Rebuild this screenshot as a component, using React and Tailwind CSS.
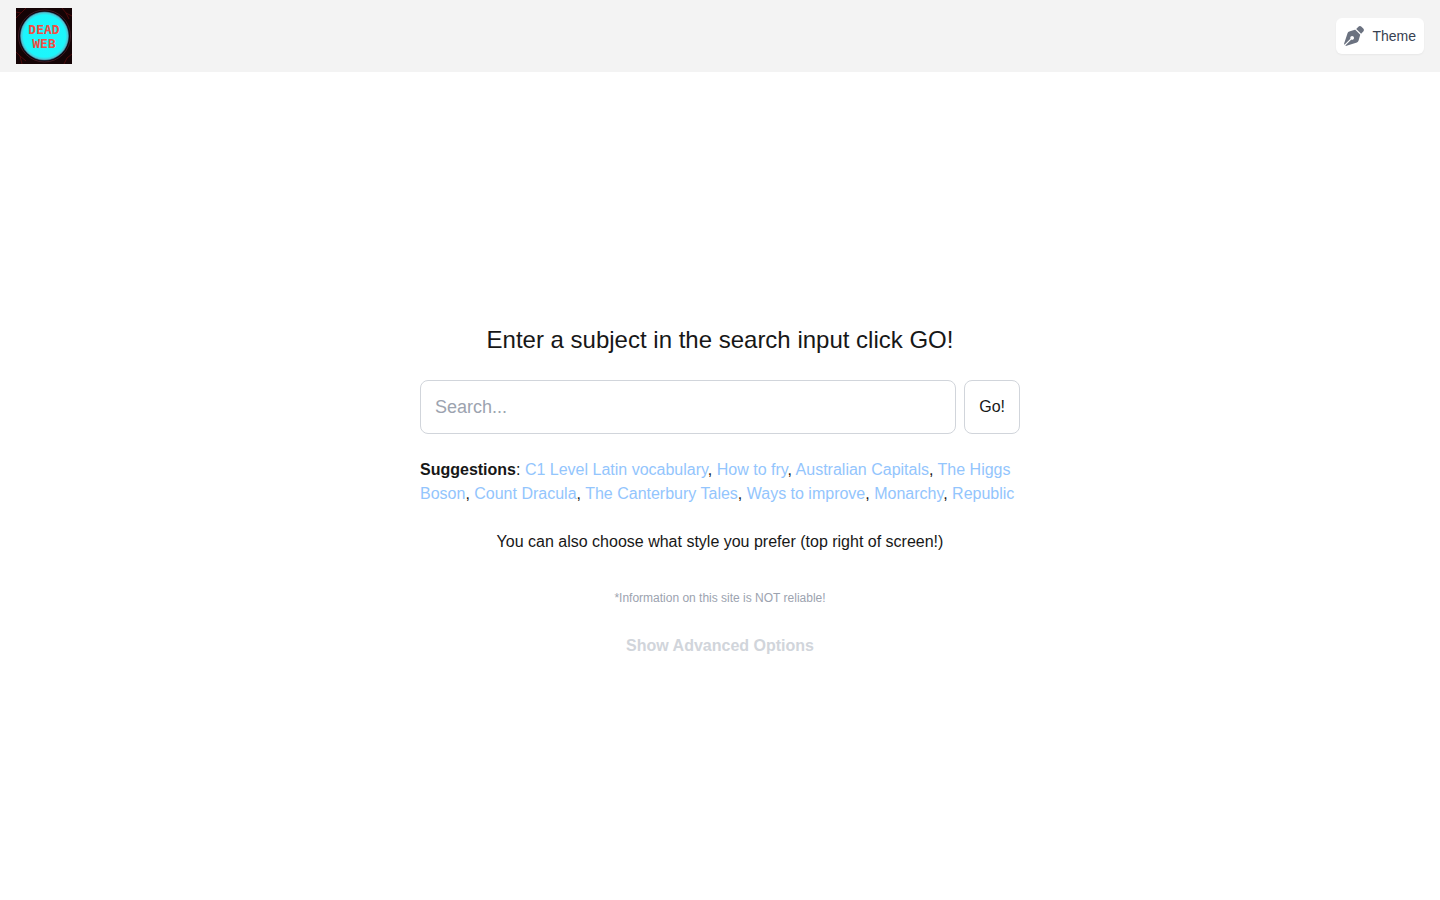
import React, { useState } from 'react';
import { FaPenNib } from 'react-icons/fa6';

const SUGGESTIONS = [
  'C1 Level Latin vocabulary',
  'How to fry',
  'Australian Capitals',
  'The Higgs Boson',
  'Count Dracula',
  'The Canterbury Tales',
  'Ways to improve',
  'Monarchy',
  'Republic',
];

const Logo = () => (
  <svg viewBox="0 0 56 56" className="size-14" role="img" aria-label="Dead Web">
    <defs>
      <radialGradient id="orb">
        <stop offset="0" stopColor="#1ff4fb" />
        <stop offset="0.86" stopColor="#1cf6fc" />
        <stop offset="0.95" stopColor="#4fc4d2" />
        <stop offset="1" stopColor="#27506a" />
      </radialGradient>
    </defs>
    <rect width="56" height="56" fill="#140305" />
    <path
      d="M0 10 5 5 10 0M0 4l5 1M0 44l4 4 2 8M4 48l6 5M46 0l4 5 6 3M50 5l3 6M56 46l-5 4-3 6"
      fill="none"
      stroke="#5a0c0e"
      strokeWidth="0.8"
    />
    <circle cx="28.5" cy="28" r="26" fill="#0c060d" stroke="#5c2a35" strokeWidth="0.6" />
    <circle cx="28.5" cy="28" r="24.5" fill="url(#orb)" />
    <g
      fill="#f04e42"
      fontFamily="'DejaVu Sans Mono', monospace"
      fontSize="13"
      fontWeight="700"
      textAnchor="middle"
    >
      <text x="28" y="26">DEAD</text>
      <text x="28" y="40">WEB</text>
    </g>
  </svg>
);

const Header = () => (
  <header className="flex items-center justify-between bg-[#f3f3f3] px-4 py-2">
    <a href="#home">
      <Logo />
    </a>
    <button
      type="button"
      className="flex items-center gap-2 rounded-md bg-white p-2 text-sm text-[#374151] shadow-xs"
    >
      <FaPenNib className="size-5 text-[#6b7280]" aria-hidden="true" />
      Theme
    </button>
  </header>
);

const App = () => {
  const [query, setQuery] = useState('');

  return (
    <div className="flex min-h-screen flex-col bg-white font-['Liberation_Sans',Arial,sans-serif] text-[#171717]">
      <Header />

      <main className="flex flex-1 flex-col items-center justify-center px-4 pt-2.5">
        <div className="flex w-full max-w-[600px] flex-col">
          <h1 className="mb-6 text-center text-2xl">
            Enter a subject in the search input click GO!
          </h1>

          {/* Search */}
          <form className="mb-6 flex gap-2" onSubmit={(e) => e.preventDefault()}>
            <input
              type="text"
              aria-label="Search"
              placeholder="Search..."
              value={query}
              onChange={(e) => setQuery(e.target.value)}
              className="min-w-0 flex-1 rounded-lg border border-[#d1d5db] p-3.5 text-lg/6 placeholder:text-[#9ca3af]"
            />
            <button type="submit" className="rounded-lg border border-[#d1d5db] p-3.5">
              Go!
            </button>
          </form>

          {/* Suggestions */}
          <p className="mb-6">
            <strong>Suggestions</strong>:{' '}
            {SUGGESTIONS.map((item, idx) => (
              <React.Fragment key={item}>
                {idx > 0 && ', '}
                <a href="#search" onClick={() => setQuery(item)} className="text-[#93c5fd]">
                  {item}
                </a>
              </React.Fragment>
            ))}
          </p>

          <p className="text-center">
            You can also choose what style you prefer (top right of screen!)
          </p>

          <p className="mt-9 text-center text-xs text-[#9ca3af]">
            *Information on this site is NOT reliable!
          </p>

          <button type="button" className="mt-7 self-center font-bold text-[#d1d5db]">
            Show Advanced Options
          </button>
        </div>
      </main>
    </div>
  );
};

export default App;
